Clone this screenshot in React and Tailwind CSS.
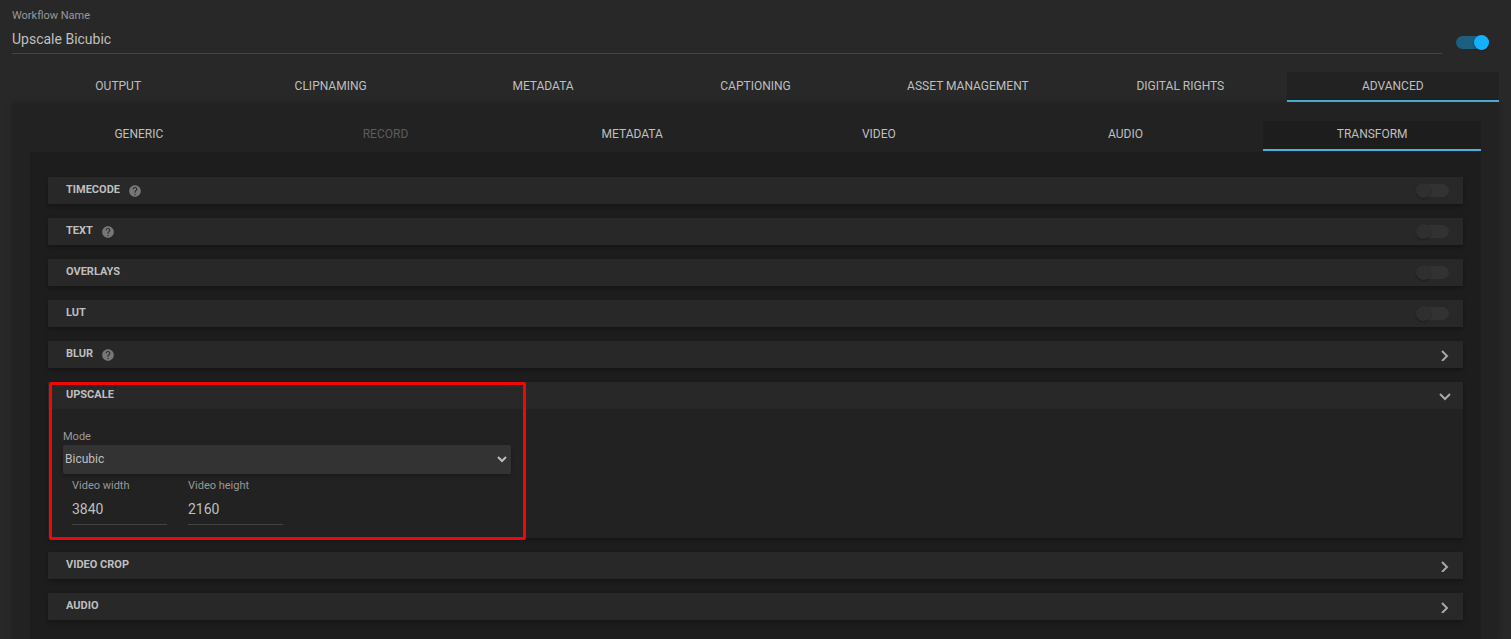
import React, { useState } from 'react';
import clsx from 'clsx';

const MAIN_TABS = ['Output', 'Clipnaming', 'Metadata', 'Captioning', 'Asset management', 'Digital rights', 'Advanced'];
const SUB_TABS = ['Generic', 'Record', 'Metadata', 'Video', 'Audio', 'Transform'];

function Switch({ label, checked, onChange }) {
  return (
    <label className="relative flex h-[15px] w-[33px] shrink-0 cursor-pointer items-center">
      <input
        type="checkbox"
        role="switch"
        aria-label={label}
        checked={checked}
        onChange={(e) => onChange(e.target.checked)}
        className="peer absolute inset-0 cursor-pointer opacity-0"
      />
      <span className="h-[13px] w-full rounded-full bg-[#323232] peer-checked:bg-[#1d5f7f]" />
      <span className="pointer-events-none absolute left-0 size-[15px] rounded-full bg-[#2f2f2f] shadow-[0_1px_2px_rgba(0,0,0,0.3)] peer-checked:right-0 peer-checked:left-auto peer-checked:bg-[#12b0ff]" />
    </label>
  );
}

function HelpIcon() {
  return (
    <svg viewBox="0 0 24 24" className="size-[14px] text-[#777777]" fill="currentColor" aria-hidden="true">
      <path d="M12 2C6.48 2 2 6.48 2 12s4.48 10 10 10 10-4.48 10-10S17.52 2 12 2zm1 17h-2v-2h2v2zm2.07-7.75-.9.92C13.45 12.9 13 13.5 13 15h-2v-.5c0-1.1.45-2.1 1.17-2.83l1.24-1.26c.37-.36.59-.86.59-1.41 0-1.1-.9-2-2-2s-2 .9-2 2H8c0-2.21 1.79-4 4-4s4 1.79 4 4c0 .88-.36 1.68-.93 2.25z" />
    </svg>
  );
}

function Chevron({ open }) {
  return (
    <svg viewBox="0 0 12 12" className="size-3 text-[#a8a8a8]" fill="none" stroke="currentColor" strokeWidth="2" aria-hidden="true">
      <path d={open ? 'M1 4 6 9 11 4' : 'M3 2 8 7 3 12'} />
    </svg>
  );
}

function SectionTitle({ title, help }) {
  return (
    <span className="flex items-center gap-2">
      <span className="pb-px text-[11px] leading-4 font-bold uppercase">{title}</span>
      {help && <HelpIcon />}
    </span>
  );
}

function ToggleSection({ title, help }) {
  const [enabled, setEnabled] = useState(false);

  return (
    <section className="flex h-[27px] items-center justify-between bg-[#282828] pr-3.5 pl-[18px] shadow-[0_2px_4px_rgba(0,0,0,0.3)]">
      <SectionTitle title={title} help={help} />
      <Switch label={title} checked={enabled} onChange={setEnabled} />
    </section>
  );
}

function ExpandSection({ title, help, defaultOpen = false, children }) {
  const [open, setOpen] = useState(defaultOpen);

  return (
    <section className="bg-[#222222] shadow-[0_2px_4px_rgba(0,0,0,0.3)]">
      <button
        type="button"
        aria-expanded={open}
        onClick={() => setOpen(!open)}
        className="flex h-[27px] w-full cursor-pointer items-center justify-between bg-[#282828] pr-3 pl-[18px]"
      >
        <SectionTitle title={title} help={help} />
        <Chevron open={open} />
      </button>
      {open && children}
    </section>
  );
}

function NumberField({ id, label, value, onChange }) {
  return (
    <div className="w-[95px]">
      <label htmlFor={id} className="block text-[11px] leading-4 text-[#999999]">{label}</label>
      <input
        id={id}
        type="text"
        inputMode="numeric"
        value={value}
        onChange={(e) => onChange(e.target.value)}
        className="block h-[31px] w-full border-b border-[#444444] bg-transparent text-sm outline-none"
      />
    </div>
  );
}

function UpscaleForm() {
  const [mode, setMode] = useState('Bicubic');
  const [width, setWidth] = useState('3840');
  const [height, setHeight] = useState('2160');

  return (
    <div className="w-[463px] pt-5 pb-[13px] pl-[15px]">
      <label htmlFor="mode" className="block text-[11px] leading-4 text-[#999999]">Mode</label>
      <div className="relative">
        <select
          id="mode"
          value={mode}
          onChange={(e) => setMode(e.target.value)}
          className="block h-[29px] w-full appearance-none rounded-xs bg-[#333333] pb-px pl-0.5 text-xs shadow-[0_2px_4px_rgba(0,0,0,0.25)] outline-none"
        >
          <option>Bicubic</option>
          <option>Bilinear</option>
          <option>Lanczos</option>
        </select>
        <svg viewBox="0 0 10 10" className="pointer-events-none absolute top-[9px] right-1 size-2.5" fill="none" stroke="currentColor" strokeWidth="2" aria-hidden="true">
          <path d="M1 3 5 7 9 3" />
        </svg>
      </div>
      <div className="flex gap-[21px] pt-1 pl-[9px]">
        <NumberField id="video-width" label="Video width" value={width} onChange={setWidth} />
        <NumberField id="video-height" label="Video height" value={height} onChange={setHeight} />
      </div>
    </div>
  );
}

export default function App() {
  const [name, setName] = useState('Upscale Bicubic');
  const [active, setActive] = useState(true);
  const [tab, setTab] = useState('Advanced');
  const [subTab, setSubTab] = useState('Transform');

  return (
    <div className="flex min-h-screen flex-col bg-[#282828] px-3 pt-2 font-['Roboto',sans-serif] text-[#bfbfbf]">
      <header className="flex items-center">
        <div className="flex-1">
          <label htmlFor="workflow-name" className="block text-[11px] leading-4 text-[#999999]">Workflow Name</label>
          <input
            id="workflow-name"
            type="text"
            value={name}
            onChange={(e) => setName(e.target.value)}
            className="block h-[30px] w-full border-b border-[#444444] bg-transparent text-sm outline-none"
          />
        </div>
        <div className="pt-[22px] pr-2.5 pl-3.5">
          <Switch label="Workflow enabled" checked={active} onChange={setActive} />
        </div>
      </header>

      <nav role="tablist" className="mt-[18px] grid grid-cols-7">
        {MAIN_TABS.map((item) => (
          <button
            key={item}
            type="button"
            role="tab"
            aria-selected={tab === item}
            onClick={() => setTab(item)}
            className={clsx(
              'h-[30px] cursor-pointer border-b-2 text-xs uppercase',
              tab === item ? 'border-[#4eb3dc] bg-[#222222]' : 'border-transparent'
            )}
          >
            {item}
          </button>
        ))}
      </nav>

      <main className="mt-px flex flex-1 flex-col bg-[#222222] px-[18px] pt-[18px] shadow-[0_0_6px_rgba(0,0,0,0.2)]">
        <nav role="tablist" className="flex justify-between">
          {SUB_TABS.map((item) => (
            <button
              key={item}
              type="button"
              role="tab"
              disabled={item === 'Record'}
              aria-selected={subTab === item}
              onClick={() => setSubTab(item)}
              className={clsx(
                'h-[30px] w-[15%] border-b-2 pb-0.5 text-xs uppercase disabled:text-[#5c5c5c]',
                subTab === item ? 'border-[#4eb3dc] bg-[#1d1d1d]' : 'border-transparent'
              )}
            >
              {item}
            </button>
          ))}
        </nav>

        <div className="mt-px flex flex-1 flex-col gap-3.5 bg-[#1d1d1d] px-[18px] pt-[25px] pb-[18px]">
          <ToggleSection title="Timecode" help />
          <ToggleSection title="Text" help />
          <ToggleSection title="Overlays" />
          <ToggleSection title="LUT" />
          <ExpandSection title="Blur" help />
          <div className="relative">
            <ExpandSection title="Upscale" defaultOpen>
              <UpscaleForm />
            </ExpandSection>
            {/* highlight around the upscale settings */}
            <div className="pointer-events-none absolute top-0 -bottom-0.5 left-px w-[477px] rounded-xs border-3 border-[#f00808]" />
          </div>
          <ExpandSection title="Video crop" />
          <ExpandSection title="Audio" />
        </div>
      </main>
    </div>
  );
}
